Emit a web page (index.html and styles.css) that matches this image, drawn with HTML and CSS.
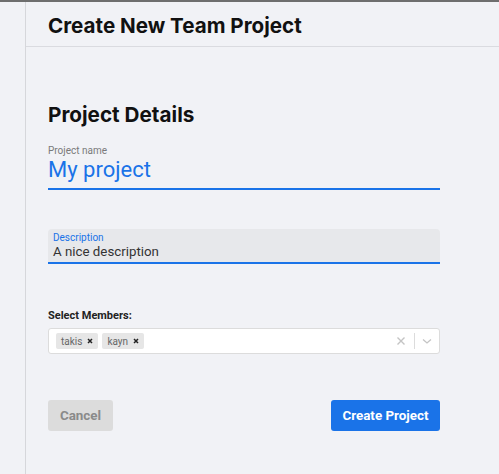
FILE: index.html
```html
<!DOCTYPE html>
<html lang="en">
<head>
<meta charset="utf-8">
<title>Create New Team Project</title>
<link rel="stylesheet" href="styles.css">
</head>
<body>
<div class="page">
  <aside class="side"></aside>
  <main class="main">
    <header class="head">
      <h1 class="title">Create New Team Project</h1>
    </header>
    <section class="content">
      <h2 class="section-title">Project Details</h2>

      <div class="field-name">
        <label class="small-label">Project name</label>
        <div class="name-value">My project</div>
      </div>

      <div class="field-desc">
        <label class="small-label blue">Description</label>
        <div class="desc-value">A nice description</div>
      </div>

      <div class="members">
        <div class="members-label">Select Members:</div>
        <div class="select">
          <div class="chips">
            <span class="chip">takis <svg class="chip-x" width="6" height="6" viewBox="0 0 6 6"><path d="M1 1 L5 5 M5 1 L1 5" stroke="#222" stroke-width="1.5" fill="none"/></svg></span>
            <span class="chip">kayn <svg class="chip-x" width="6" height="6" viewBox="0 0 6 6"><path d="M1 1 L5 5 M5 1 L1 5" stroke="#222" stroke-width="1.5" fill="none"/></svg></span>
          </div>
          <div class="indicators">
            <svg class="clear" width="10" height="10" viewBox="0 0 10 10"><path d="M1.5 1.5 L8.5 8.5 M8.5 1.5 L1.5 8.5" stroke="#c4c4c4" stroke-width="1.4" fill="none"/></svg>
            <span class="sep"></span>
            <svg class="chev" width="12" height="8" viewBox="0 0 12 8"><path d="M2 2.5 L6 6 L10 2.5" stroke="#c4c4c4" stroke-width="1.3" fill="none"/></svg>
          </div>
        </div>
      </div>

      <div class="actions">
        <button class="btn btn-cancel">Cancel</button>
        <button class="btn btn-primary">Create Project</button>
      </div>
    </section>
  </main>
</div>
</body>
</html>
```
FILE: styles.css
```css
html, body {
  margin: 0;
  padding: 0;
  height: 100%;
}
body {
  background: #f1f2f6;
  font-family: Roboto, "Liberation Sans", sans-serif;
  color: #111;
}
.page {
  display: flex;
  min-height: 100%;
  border-top: 2px solid #6e6e6e;
  box-sizing: border-box;
}
.side {
  width: 25px;
  flex: none;
}
.main {
  flex: 1;
  border-left: 1px solid #d6d7db;
}
.head {
  padding: 12px 0 8px 22px;
  border-bottom: 1px solid #dadbe0;
}
.title {
  margin: 0;
  font-family: Inter, Roboto, sans-serif;
  font-weight: 700;
  font-size: 20.6px;
  line-height: 24px;
  color: #111;
}
.content {
  width: 392px;
  padding: 56px 0 0 22px;
}
.section-title {
  margin: 0;
  font-family: Inter, Roboto, sans-serif;
  font-weight: 700;
  font-size: 20.7px;
  line-height: 24px;
  color: #111;
}
.field-name {
  margin-top: 18px;
  border-bottom: 2px solid #1a73e8;
  padding-bottom: 5px;
}
.small-label {
  display: block;
  font-size: 10px;
  line-height: 12px;
  color: #7a7a7a;
}
.small-label.blue {
  color: #1a73e8;
}
.name-value {
  font-size: 22px;
  line-height: 26px;
  color: #1a73e8;
}
.field-desc {
  margin-top: 39px;
  background: #e7e8eb;
  border-radius: 4px 4px 0 0;
  border-bottom: 2px solid #1a73e8;
  padding: 3px 5px 2px;
}
.desc-value {
  font-size: 13.3px;
  line-height: 16px;
  color: #333;
}
.members {
  margin-top: 45px;
}
.members-label {
  font-size: 11px;
  font-weight: 700;
  line-height: 14px;
  color: #222;
}
.select {
  margin-top: 5px;
  height: 26px;
  box-sizing: border-box;
  background: #fff;
  border: 1px solid #dcdcdc;
  border-radius: 3px;
  display: flex;
  align-items: center;
  justify-content: space-between;
  padding: 0 0 0 7px;
}
.chips {
  display: flex;
  gap: 4px;
}
.chip {
  display: inline-flex;
  align-items: center;
  height: 16px;
  padding: 0 5px 0 5px;
  background: #e6e6e6;
  border-radius: 2px;
  font-size: 10px;
  color: #666;
  gap: 5px;
}
.indicators {
  display: flex;
  align-items: center;
  height: 100%;
}
.clear {
  margin-right: 8px;
}
.sep {
  width: 1px;
  height: 16px;
  background: #dcdcdc;
}
.chev {
  margin: 0 6px 0 6px;
}
.actions {
  margin-top: 46px;
  display: flex;
  justify-content: space-between;
}
.btn {
  height: 31px;
  border: none;
  border-radius: 3px;
  font-family: Roboto, "Liberation Sans", sans-serif;
  font-weight: 700;
  font-size: 13.4px;
  cursor: pointer;
}
.btn-cancel {
  width: 65px;
  background: #dcdcdc;
  color: #8a8a8a;
}
.btn-primary {
  width: 109px;
  background: #1a73e8;
  color: #fff;
}
```
